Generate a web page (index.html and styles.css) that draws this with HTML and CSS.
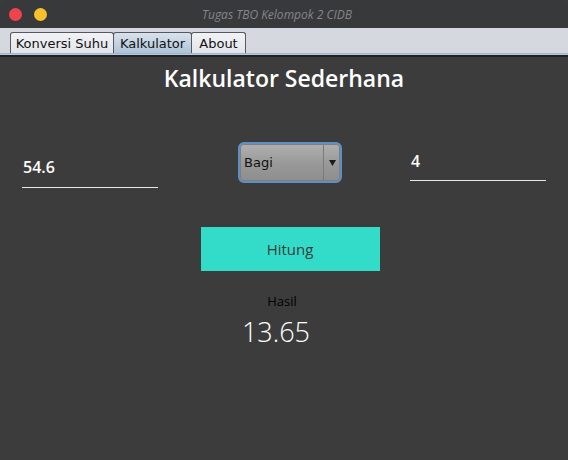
FILE: index.html
```html
<!DOCTYPE html>
<html>
<head>
<meta charset="utf-8">
<link rel="stylesheet" href="styles.css">
</head>
<body>
<div class="window">
  <div class="titlebar">
    <div class="lights">
      <span class="light red"></span>
      <span class="light yellow"></span>
    </div>
    <div class="wtitle">Tugas TBO Kelompok 2 CIDB</div>
  </div>
  <div class="tabbar">
    <div class="tab t1">Konversi Suhu</div>
    <div class="tab t2 active">Kalkulator</div>
    <div class="tab t3">About</div>
  </div>
  <div class="tabline"></div>
  <div class="content">
    <h1 class="heading">Kalkulator Sederhana</h1>
    <div class="row">
      <div class="field left"><span class="val">54.6</span></div>
      <div class="combo">
        <span class="combo-text">Bagi</span>
        <span class="combo-arrow"><svg width="7" height="6" viewBox="0 0 7 6"><path d="M0 0H7L3.5 6Z" fill="#1a1a1a"/></svg></span>
      </div>
      <div class="field right"><span class="val">4</span></div>
    </div>
    <div class="btnwrap"><div class="btn">Hitung</div></div>
    <div class="hasil">Hasil</div>
    <div class="result">13.65</div>
  </div>
</div>
</body>
</html>
```

FILE: styles.css
```css
* { box-sizing: border-box; }
html, body { margin: 0; padding: 0; background: #3c3c3c; }
body { width: 568px; height: 460px; overflow: hidden; font-family: "DejaVu Sans", sans-serif; }
.window { width: 568px; height: 460px; display: flex; flex-direction: column; background: #3c3c3c; }
.titlebar {
  height: 28px; background: #38393b; border-radius: 8px 8px 0 0;
  position: relative; display: flex; align-items: center; justify-content: center;
  padding-right: 14px;
}
.lights { position: absolute; left: 9px; top: 8px; display: flex; gap: 12px; }
.light { width: 13px; height: 13px; border-radius: 50%; display: block; }
.red { background: #f1434f; }
.yellow { background: #f8c12c; }
.wtitle { color: #85868a; font-style: italic; font-size: 12px; font-family: "Open Sans", "DejaVu Sans", sans-serif; }
.tabbar {
  height: 25px; background: #d5d8df; display: flex; align-items: flex-end; padding-left: 10px;
}
.tab {
  height: 21px; border: 1px solid #55585e; border-bottom: none; border-radius: 3px 3px 0 0;
  background: linear-gradient(#f1f2f5, #e3e5ea); color: #111; font-size: 13px;
  text-align: center; line-height: 21px; margin-right: -1px;
}
.t1 { width: 104px; }
.t2 { width: 79px; }
.t3 { width: 55px; }
.tab.active { background: linear-gradient(#d9e2ec, #aec4d8); }
.tabline { height: 4px; background: #b7c9dc; border-top: 1px solid #9fb5cc; border-bottom: 2px solid #1f2125; }
.content { flex: 1; display: flex; flex-direction: column; align-items: center; }
.heading {
  margin: 5px 0 0; color: #fff; font-size: 23px; font-weight: 600; line-height: 32px;
  font-family: "Open Sans", "DejaVu Sans", sans-serif;
}
.row { width: 100%; display: flex; align-items: flex-start; padding: 0 22px; margin-top: 46px; height: 52px; }
.field {
  width: 136px; border-bottom: 1px solid #e8e8e8; color: #fff; font-weight: 600; font-size: 16px;
  padding-left: 1px; font-family: "Open Sans", "DejaVu Sans", sans-serif;
}
.field.left { margin-top: 18px; height: 30px; line-height: 19px; }
.field.right { margin-left: auto; margin-top: 9px; height: 32px; line-height: 24px; }
.combo {
  margin-left: 80px; margin-top: 2px; width: 104px; height: 41px; border: 2px solid #5f8fc4; border-radius: 6px;
  background: linear-gradient(#b0b0b0, #989898 55%, #8e8e8e); display: flex; align-items: stretch;
  box-shadow: inset 0 0 0 1px #7e7e7e;
}
.combo-text { flex: 1; font-size: 13px; color: #111; display: flex; align-items: center; padding-left: 4px; }
.combo-arrow { width: 17px; border-left: 1px solid #7a7a7a; display: flex; align-items: center; justify-content: center; }
.btnwrap { margin-top: 35px; margin-left: 12px; }
.btn {
  width: 179px; height: 44px; background: #33dcc8; color: #3a3d3d; font-size: 15px;
  display: flex; align-items: center; justify-content: center;
  font-family: "Open Sans", "DejaVu Sans", sans-serif; font-weight: 400;
}
.hasil { margin-top: 21px; margin-left: -4px; color: #000; font-size: 13px; font-family: "Open Sans", "DejaVu Sans", sans-serif; }
.result { margin-top: 4px; margin-left: -16px; color: #fff; font-size: 27px; line-height: 36px; font-family: "Open Sans", "DejaVu Sans", sans-serif; font-weight: 300; }
```
